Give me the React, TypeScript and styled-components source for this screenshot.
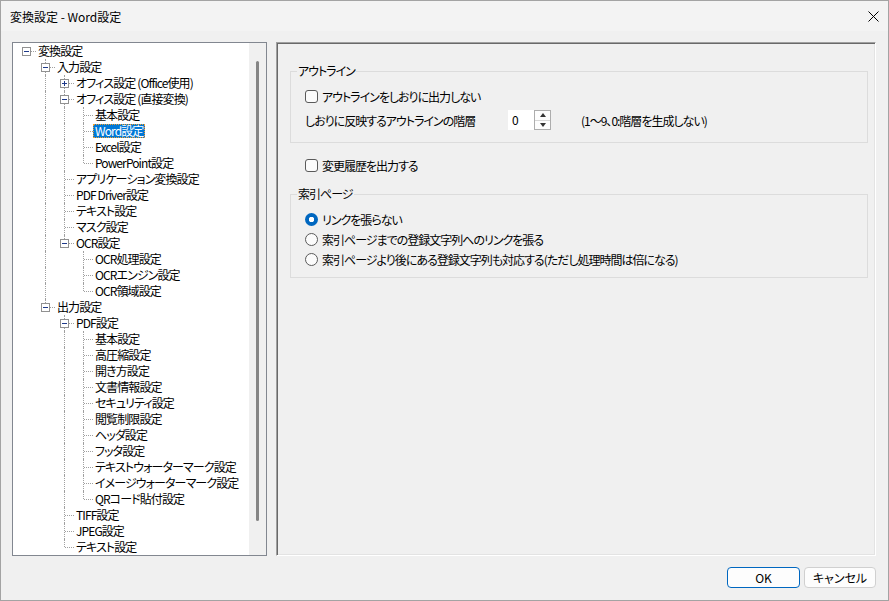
import { ReactElement } from 'react'
import styled, { createGlobalStyle, css } from 'styled-components'

const GlobalStyle = createGlobalStyle`
  html, body {
    margin: 0;
    padding: 0;
    background: #f0f0f0;
  }
  body {
    font-family: "Noto Sans CJK JP", "Noto Sans", sans-serif;
    font-size: 12px;
    font-feature-settings: "palt";
    color: #000;
  }
`

interface TreeNode {
  label: string
  children?: TreeNode[]
  collapsed?: boolean
  selected?: boolean
}

interface FlatRow {
  node: TreeNode
  level: number
  conts: boolean[]
  last: boolean
}

const leaf = (label: string): TreeNode => ({ label })

const tree: TreeNode[] = [
  {
    label: '変換設定',
    children: [
      {
        label: '入力設定',
        children: [
          { label: 'オフィス設定 (Office使用)', collapsed: true, children: [leaf('x')] },
          {
            label: 'オフィス設定 (直接変換)',
            children: [
              leaf('基本設定'),
              { label: 'Word設定', selected: true },
              leaf('Excel設定'),
              leaf('PowerPoint設定'),
            ],
          },
          leaf('アプリケーション変換設定'),
          leaf('PDF Driver設定'),
          leaf('テキスト設定'),
          leaf('マスク設定'),
          {
            label: 'OCR設定',
            children: [leaf('OCR処理設定'), leaf('OCRエンジン設定'), leaf('OCR領域設定')],
          },
        ],
      },
      {
        label: '出力設定',
        children: [
          {
            label: 'PDF設定',
            children: [
              leaf('基本設定'),
              leaf('高圧縮設定'),
              leaf('開き方設定'),
              leaf('文書情報設定'),
              leaf('セキュリティ設定'),
              leaf('閲覧制限設定'),
              leaf('ヘッダ設定'),
              leaf('フッタ設定'),
              leaf('テキストウォーターマーク設定'),
              leaf('イメージウォーターマーク設定'),
              leaf('QRコード貼付設定'),
            ],
          },
          leaf('TIFF設定'),
          leaf('JPEG設定'),
          leaf('テキスト設定'),
        ],
      },
    ],
  },
]

const flatten = (nodes: TreeNode[], level: number, conts: boolean[], out: FlatRow[]): FlatRow[] => {
  nodes.forEach((node, i) => {
    const last = i === nodes.length - 1
    out.push({ node, level, conts, last })
    if (node.children && !node.collapsed) flatten(node.children, level + 1, [...conts, !last], out)
  })
  return out
}

const rows = flatten(tree, 0, [], [])

const Window = styled.div`
  box-sizing: border-box;
  width: 889px;
  height: 601px;
  border: 1px solid #a3a3a3;
  display: flex;
  flex-direction: column;
  background: #f0f0f0;
`

const TitleBar = styled.div`
  height: 30px;
  flex: none;
  display: flex;
  align-items: center;
  justify-content: space-between;
  padding-left: 9px;
  background: #f3f3f3;
`

const CloseButton = styled.div`
  width: 30px;
  height: 30px;
  display: flex;
  align-items: center;
  justify-content: center;
`

const Body = styled.div`
  flex: 1;
  display: flex;
  flex-direction: column;
  padding: 11px 12px 0 11px;
`

const Main = styled.div`
  height: 514px;
  display: flex;
  gap: 9px;
`

const TreePanel = styled.div`
  box-sizing: border-box;
  width: 255px;
  border: 1px solid #828790;
  background: #fff;
  display: flex;
`

const TreeList = styled.div`
  flex: 1;
  overflow: hidden;
  padding-left: 4px;
`

const ScrollTrack = styled.div`
  width: 17px;
  background: #f0f0f0;
`

const ScrollThumb = styled.div`
  width: 3px;
  height: 460px;
  margin: 18px 0 0 7px;
  border-radius: 2px;
  background: #858585;
`

const TreeRow = styled.div`
  height: 16px;
  display: flex;
  align-items: center;
`

type Vert = 'none' | 'full' | 'top'

const Guide = styled.span<{ $vert: Vert; $branch?: boolean }>`
  position: relative;
  flex: none;
  width: 19px;
  height: 16px;

  &::before {
    content: '';
    position: absolute;
    left: 9px;
    top: 0;
    height: ${({ $vert }) => ($vert === 'full' ? 16 : 8)}px;
    border-left: 1px dotted #a0a0a0;
    display: ${({ $vert }) => ($vert === 'none' ? 'none' : 'block')};
  }

  &::after {
    content: '';
    position: absolute;
    left: 10px;
    top: 8px;
    width: 9px;
    border-top: 1px dotted #a0a0a0;
    display: ${({ $branch }) => ($branch ? 'block' : 'none')};
  }
`

const Expander = styled.span<{ $open: boolean }>`
  position: absolute;
  z-index: 1;
  left: 5px;
  top: 4px;
  box-sizing: border-box;
  width: 9px;
  height: 9px;
  border: 1px solid #919191;
  background: #fff;

  &::before {
    content: '';
    position: absolute;
    left: 1px;
    top: 3px;
    width: 5px;
    height: 1px;
    background: #1f3a8a;
  }

  &::after {
    content: '';
    position: absolute;
    left: 3px;
    top: 1px;
    width: 1px;
    height: 5px;
    background: #1f3a8a;
    display: ${({ $open }) => ($open ? 'none' : 'block')};
  }
`

const TreeLabel = styled.span<{ $selected?: boolean }>`
  padding: 0 2px;
  line-height: 14px;
  letter-spacing: -0.9px;
  white-space: nowrap;
  ${({ $selected }) =>
    $selected &&
    css`
      background: #0078d7;
      color: #fff;
      outline: 1px dotted #f0a030;
      outline-offset: -1px;
    `}
`

const SettingsPanel = styled.div`
  flex: 1;
  box-sizing: border-box;
  border-top: 1px solid #a0a0a0;
  border-left: 1px solid #a0a0a0;
  border-right: 1px solid #fff;
  border-bottom: 1px solid #fff;
  box-shadow: inset 1px 1px 0 #696969, inset -1px -1px 0 #e3e3e3;
  padding: 20px 7px 0 13px;
  display: flex;
  flex-direction: column;
  letter-spacing: -1px;
`

const Group = styled.fieldset<{ $bottom: number }>`
  margin: 0;
  min-width: 0;
  border: 1px solid #dcdcdc;
  padding: 7px 12px ${({ $bottom }) => $bottom}px 14px;
  display: flex;
  flex-direction: column;
`

const GroupTitle = styled.legend`
  margin-left: -8px;
  padding: 0 1px;
  line-height: 16px;
`

const OptionRow = styled.label<{ $inset?: number }>`
  height: 20px;
  display: flex;
  align-items: center;
  gap: 4px;
  padding-left: ${({ $inset }) => $inset ?? 0}px;
  white-space: nowrap;
`

const StandaloneRow = styled(OptionRow)`
  margin: 12px 0 11px;
`

const Checkbox = styled.span`
  box-sizing: border-box;
  width: 13px;
  height: 13px;
  flex: none;
  border: 1px solid #5a5a5a;
  border-radius: 3px;
  background: #fbfbfb;
`

const Radio = styled.span<{ $checked?: boolean }>`
  box-sizing: border-box;
  width: 13px;
  height: 13px;
  flex: none;
  border-radius: 50%;
  ${({ $checked }) =>
    $checked
      ? css`
          background: radial-gradient(circle, #fff 0 2.5px, #0067c0 3px);
        `
      : css`
          border: 1px solid #5a5a5a;
          background: #fbfbfb;
        `}
`

const SpinRow = styled.div`
  height: 20px;
  margin-top: 4px;
  display: flex;
  align-items: center;
  white-space: nowrap;
`

const SpinCaption = styled.span`
  width: 203px;
`

const Spin = styled.div`
  width: 43px;
  height: 20px;
  display: flex;
  background: #fff;
`

const SpinValue = styled.span`
  flex: 1;
  padding-left: 4px;
  line-height: 20px;
`

const SpinButtons = styled.div`
  box-sizing: border-box;
  width: 17px;
  border: 1px solid #adadad;
  display: flex;
  flex-direction: column;
  background: #fdfdfd;
`

const SpinArrow = styled.span<{ $down?: boolean }>`
  flex: 1;
  display: flex;
  align-items: center;
  justify-content: center;
  ${({ $down }) => $down && 'border-top: 1px solid #d6d6d6;'}

  &::before {
    content: '';
    border-left: 3px solid transparent;
    border-right: 3px solid transparent;
    ${({ $down }) => ($down ? 'border-top: 4px solid #333;' : 'border-bottom: 4px solid #333;')}
  }
`

const Hint = styled.span`
  margin-left: 30px;
`

const Footer = styled.div`
  display: flex;
  justify-content: flex-end;
  gap: 4px;
  padding-top: 11px;
`

const Button = styled.button<{ $primary?: boolean; $width: number }>`
  width: ${({ $width }) => $width}px;
  height: 21px;
  padding: 0;
  border-radius: 4px;
  border: 1px solid ${({ $primary }) => ($primary ? '#0067c0' : '#d0d0d0')};
  background: #fdfdfd;
  font: inherit;
  color: #000;
`

const App = (): ReactElement => {
  return (
    <>
      <GlobalStyle />
      <Window>
        <TitleBar>
          <span>変換設定 - Word設定</span>
          <CloseButton>
            <svg width="11" height="11" viewBox="0 0 11 11">
              <path d="M0.5 0.5L10.5 10.5M10.5 0.5L0.5 10.5" stroke="#000" strokeWidth="1" />
            </svg>
          </CloseButton>
        </TitleBar>
        <Body>
          <Main>
            <TreePanel>
              <TreeList>
                {rows.map(({ node, level, conts, last }, i) => (
                  <TreeRow key={i}>
                    {conts.map((c, j) => (
                      <Guide key={j} $vert={c ? 'full' : 'none'} />
                    ))}
                    <Guide $vert={level === 0 ? 'none' : last ? 'top' : 'full'} $branch>
                      {node.children && <Expander $open={!node.collapsed} />}
                    </Guide>
                    <TreeLabel $selected={node.selected}>{node.label}</TreeLabel>
                  </TreeRow>
                ))}
              </TreeList>
              <ScrollTrack>
                <ScrollThumb />
              </ScrollTrack>
            </TreePanel>
            <SettingsPanel>
              <Group $bottom={12}>
                <GroupTitle>アウトライン</GroupTitle>
                <OptionRow>
                  <Checkbox />
                  アウトラインをしおりに出力しない
                </OptionRow>
                <SpinRow>
                  <SpinCaption>しおりに反映するアウトラインの階層</SpinCaption>
                  <Spin>
                    <SpinValue>0</SpinValue>
                    <SpinButtons>
                      <SpinArrow />
                      <SpinArrow $down />
                    </SpinButtons>
                  </Spin>
                  <Hint>(1〜9、0:階層を生成しない)</Hint>
                </SpinRow>
              </Group>
              <StandaloneRow $inset={15}>
                <Checkbox />
                変更履歴を出力する
              </StandaloneRow>
              <Group $bottom={8}>
                <GroupTitle>索引ページ</GroupTitle>
                <OptionRow>
                  <Radio $checked />
                  リンクを張らない
                </OptionRow>
                <OptionRow>
                  <Radio />
                  索引ページまでの登録文字列へのリンクを張る
                </OptionRow>
                <OptionRow>
                  <Radio />
                  索引ページより後にある登録文字列も対応する(ただし処理時間は倍になる)
                </OptionRow>
              </Group>
            </SettingsPanel>
          </Main>
          <Footer>
            <Button $primary $width={73}>
              OK
            </Button>
            <Button $width={72}>キャンセル</Button>
          </Footer>
        </Body>
      </Window>
    </>
  )
}

export default App
